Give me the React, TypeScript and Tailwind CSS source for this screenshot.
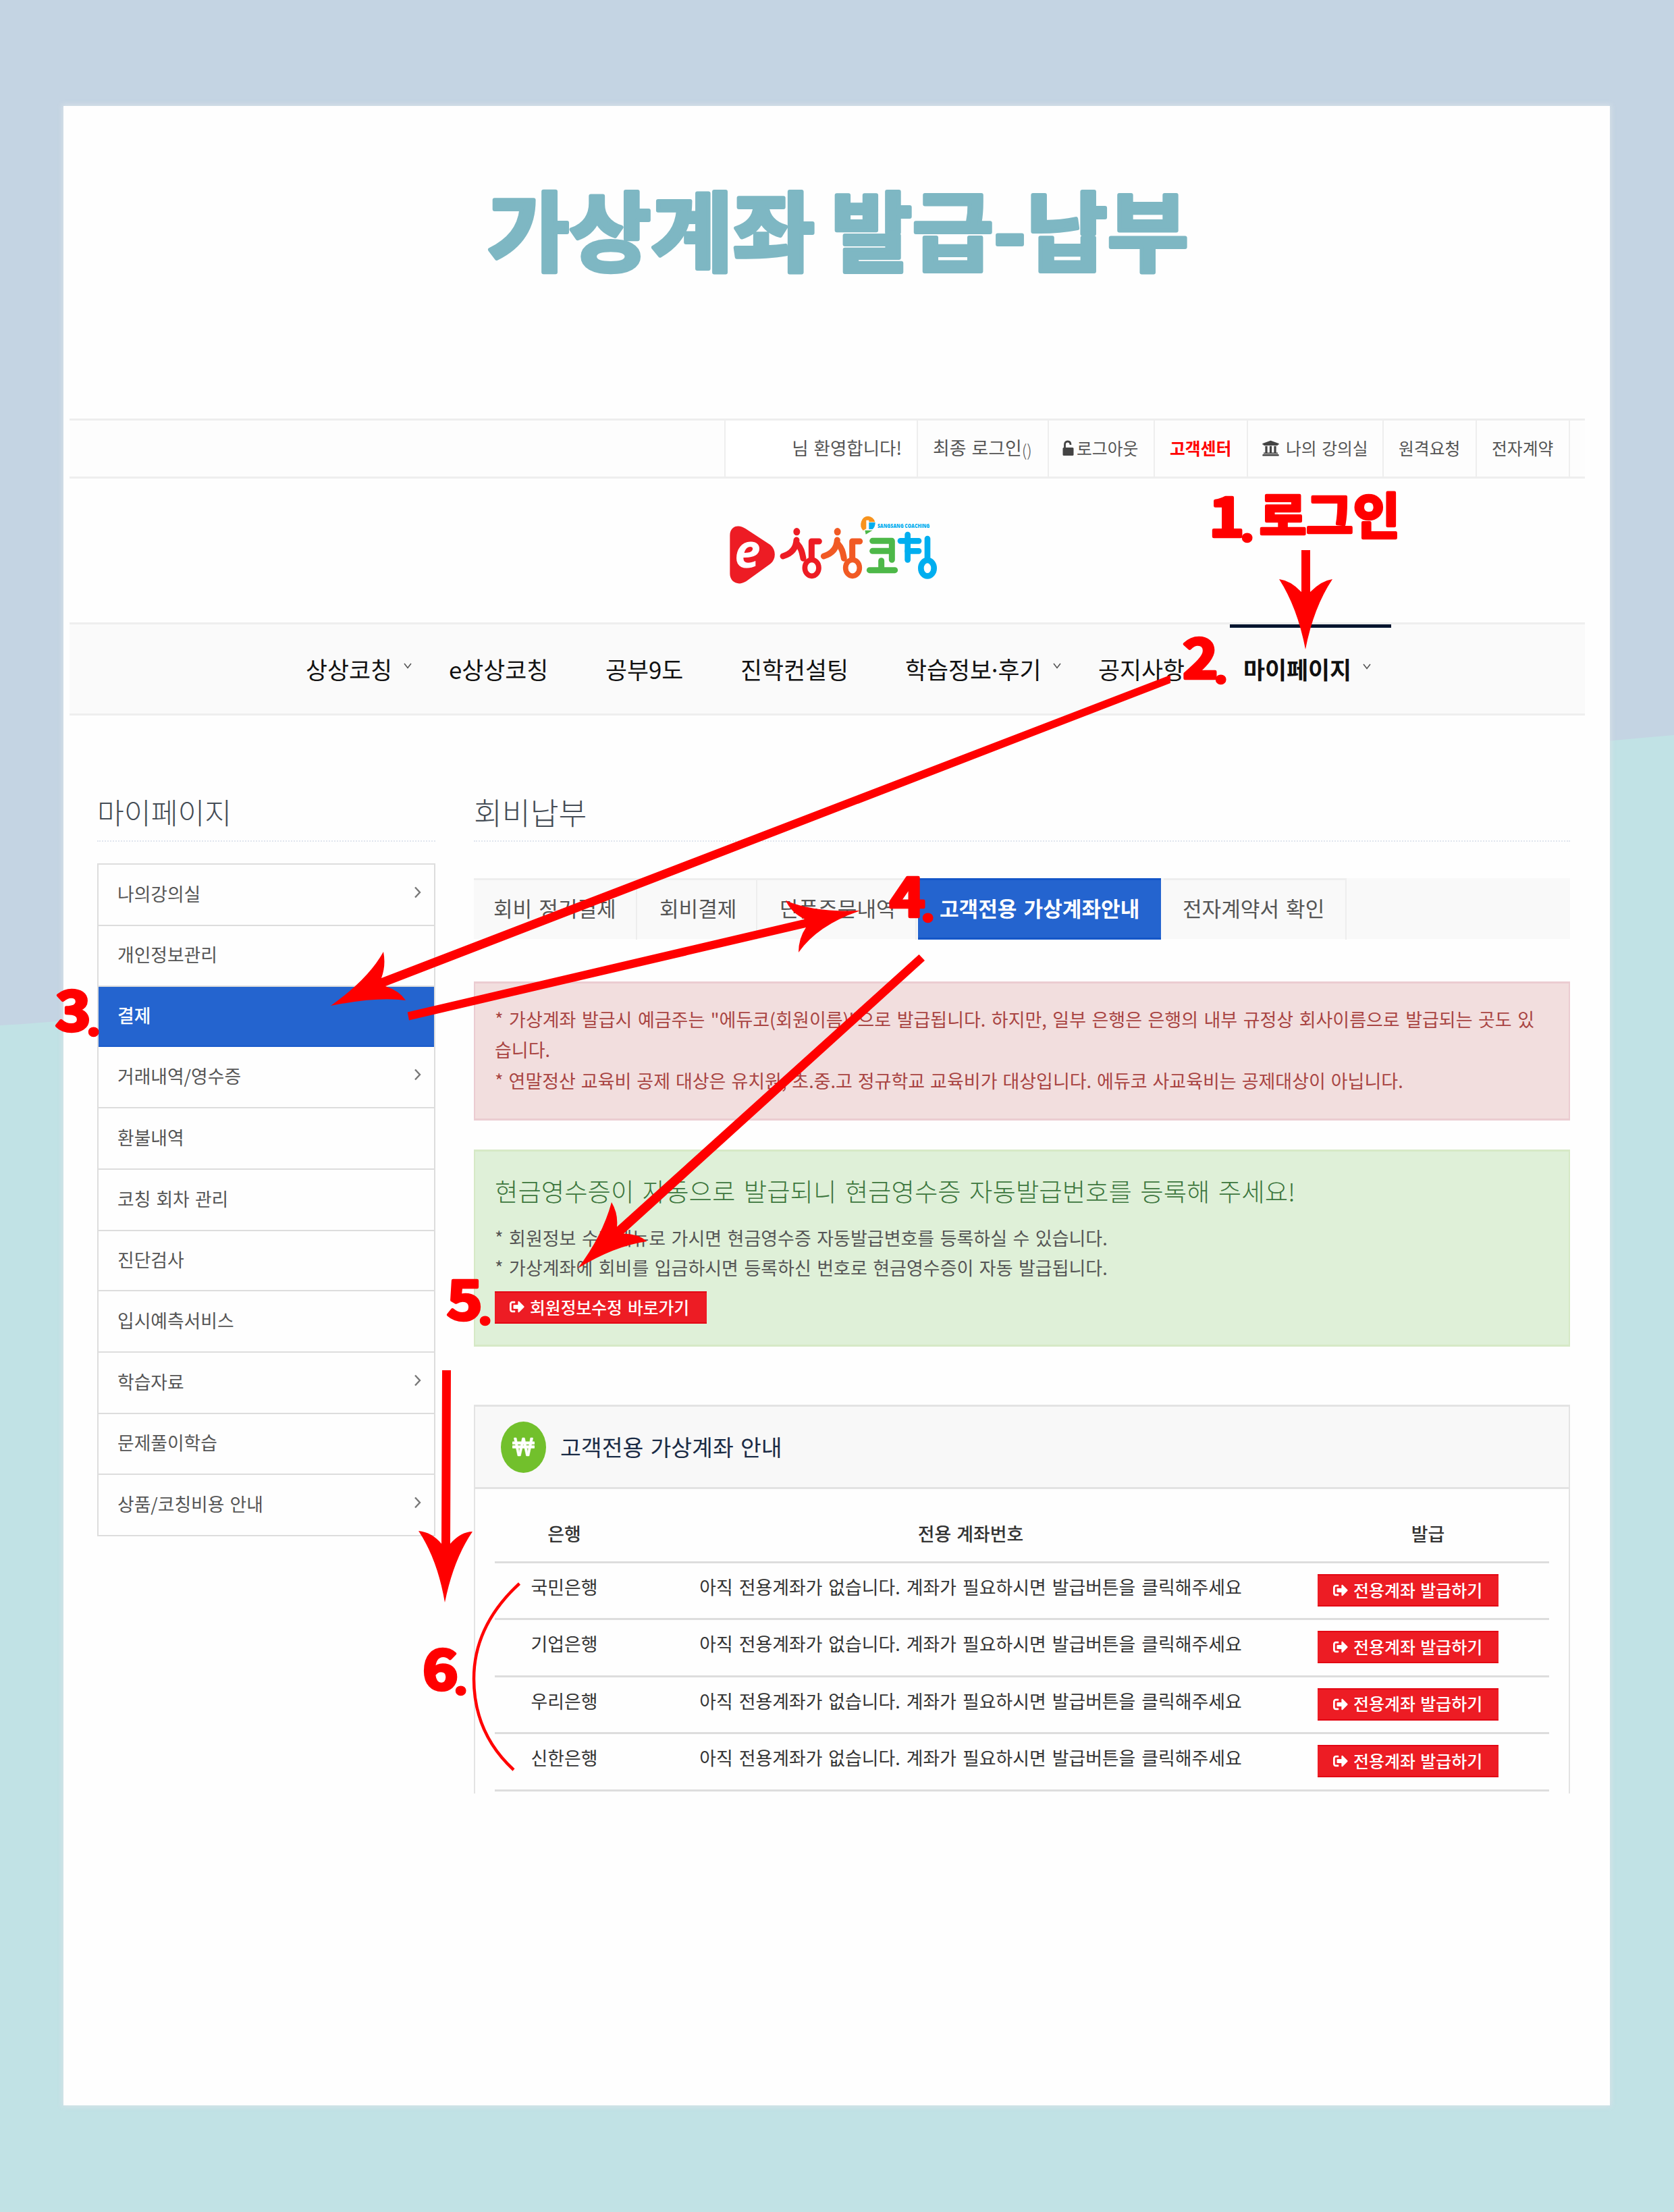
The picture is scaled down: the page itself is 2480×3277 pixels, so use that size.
import React from "react";
import { FaSignOutAlt, FaUniversity, FaWonSign } from "react-icons/fa";

const FONT = "font-['Noto_Sans_CJK_KR','Noto_Sans',sans-serif]";

function Backdrop() {
  return (
    <svg className="absolute inset-0" width="2480" height="3277" viewBox="0 0 2480 3277">
      <rect width="2480" height="3277" fill="#c4d4e3" />
      <path d="M0 1519 C700 1480 1500 1170 2480 1089 V3277 H0 Z" fill="#c1e2e5" />
    </svg>
  );
}

function Title() {
  return (
    <h1 className="flex h-[463px] items-start justify-center pt-[106px]">
      <svg width="1060" height="160" viewBox="0 0 1060 160" className="overflow-visible">
        <g
          fill="#7eb7c3"
          stroke="#7eb7c3"
          strokeWidth="6"
          strokeLinejoin="round"
          fontSize="128"
          fontWeight="700"
          fontFamily="'Noto Sans CJK KR', sans-serif"
        >
          <text x="12" y="129" textLength="485" lengthAdjust="spacingAndGlyphs">가상계좌</text>
          <text x="521" y="129" textLength="530" lengthAdjust="spacingAndGlyphs">발급-납부</text>
        </g>
      </svg>
    </h1>
  );
}

function UnlockIcon() {
  return (
    <svg width="17" height="24" viewBox="0 0 17 24" className="mr-1">
      <path d="M3.5 12 V6.5 Q3.5 2 7.8 2 Q12 2 12 7" fill="none" stroke="#444" strokeWidth="2.8" />
      <rect x="0.5" y="11" width="16" height="12" rx="1.5" fill="#444" />
    </svg>
  );
}

function TopBar() {
  const cell = "flex items-center border-l-2 border-[#eeeeee] whitespace-nowrap pb-[2px]";
  return (
    <div className="ml-[9px] flex h-[89px] w-[2245px] border-y-[3px] border-[#eeeeee] bg-[#fdfdfd] text-[24.8px] leading-none text-[#555] [word-spacing:0.08em]">
      <div className="w-[970px]" />
      <div className={`${cell} w-[285px] justify-end bg-white pr-[22px] text-[26.5px]`}>님 환영합니다!</div>
      <div className={`${cell} w-[194px] pl-[22px] text-[26.9px]`}>
        최종 로그인<span className="mt-1 text-[24px] font-light">()</span>
      </div>
      <div className={`${cell} w-[157px] pl-[20px]`}>
        <UnlockIcon />
        로그아웃
      </div>
      <div className={`${cell} w-[138px] pl-[22px] font-bold text-[#ff0000]`}>고객센터</div>
      <div className={`${cell} w-[201px] pl-[20px]`}>
        <FaUniversity className="mr-[9px] h-[26px] w-[27px] text-[#444]" />
        나의 강의실
      </div>
      <div className={`${cell} w-[138px] pl-[22px]`}>원격요청</div>
      <div className={`${cell} w-[138px] pl-[22px]`}>전자계약</div>
      <div className="flex-1 border-l-2 border-[#eeeeee]" />
    </div>
  );
}

function Figure({ x, color }: { x: number; color: string }) {
  return (
    <g transform={`translate(${x} 0)`} stroke={color} fill="none" strokeLinecap="round" strokeLinejoin="round">
      <ellipse cx="75" cy="113" rx="15" ry="17" fill={color} stroke="none" />
      <path d="M74 150 C72 190 46 212 14 222" strokeWidth="27" />
      <path d="M78 168 C98 190 99 208 104 232" strokeWidth="27" />
      <path d="M141 235 V156 H174" strokeWidth="27" />
      <ellipse cx="142" cy="274" rx="31" ry="36" strokeWidth="23" />
    </g>
  );
}

function Logo() {
  return (
    <div className="flex h-[213px] pl-[976px] pt-[41px]">
      <svg width="330" height="130" viewBox="0 0 990 390">
        <path d="M34 130 C34 88 72 78 104 100 L214 172 C240 194 240 236 214 256 L106 334 C70 356 34 336 34 300 Z" fill="#ed1c24" />
        <text
          x="54"
          y="274"
          fontSize="212"
          fontWeight="700"
          fontStyle="italic"
          fill="#fff"
          textLength="116"
          lengthAdjust="spacingAndGlyphs"
          fontFamily="'Open Sans', sans-serif"
        >
          e
        </text>
        <Figure x={256} color="#ed1c24" />
        <Figure x={437} color="#f15a24" />
        <g stroke="#4db848" strokeWidth="27" fill="none" strokeLinecap="round" strokeLinejoin="round">
          <path d="M668 154 H754 V238" />
          <path d="M668 199 H750" />
          <path d="M707 242 V282" />
          <path d="M655 284 H767" />
        </g>
        <g stroke="#00aeef" strokeWidth="26" fill="none" strokeLinecap="round" strokeLinejoin="round">
          <path d="M824 126 V238" />
          <path d="M792 154 H873" />
          <path d="M824 199 H873" />
          <path d="M912 144 V235" />
          <ellipse cx="912" cy="275" rx="29" ry="35" />
        </g>
        <path d="M648 44 A32 37 0 0 0 626 108 L640 100 V62 H652 V70 H679 A34 34 0 0 0 648 44" fill="#f7931e" />
        <path d="M652 72 H680 Q680 92 668 102 H652 Z" fill="#00aeef" />
        <path d="M634 107 L668 107 L638 125 Z" fill="#4db848" />
        <text
          x="690"
          y="96"
          fontSize="25"
          fontWeight="800"
          fill="#00aeef"
          textLength="232"
          lengthAdjust="spacingAndGlyphs"
          fontFamily="'Open Sans', sans-serif"
        >
          SANGSANG COACHING
        </text>
      </svg>
    </div>
  );
}

function Caret() {
  return (
    <svg width="12" height="9" viewBox="0 0 12 9">
      <path d="M1 1 L6 7.5 L11 1" fill="none" stroke="#555" strokeWidth="1.6" />
    </svg>
  );
}

function Nav() {
  const item = "flex items-center whitespace-nowrap";
  return (
    <div className="ml-[9px] flex h-[138px] w-[2245px] border-y-[3px] border-[#eeeeee] bg-[#fafafa] pl-[350px] text-[34.8px] leading-none text-[#111]">
      <div className={`${item} w-[212px]`}>
        상상코칭
        <span className="ml-[17px] -mt-[9px]"><Caret /></span>
      </div>
      <div className={`${item} w-[232px]`}>e상상코칭</div>
      <div className={`${item} w-[200px]`}>공부9도</div>
      <div className={`${item} w-[244px]`}>진학컨설팅</div>
      <div className={`${item} w-[286px]`}>
        학습정보<span className="-mx-[5px]">·</span>후기
        <span className="ml-[17px] -mt-[9px]"><Caret /></span>
      </div>
      <div className={`${item} w-[195px]`}>공지사항</div>
      <div className={`${item} w-[239px] border-t-[5px] border-[#02152f] pb-[4px] pl-[20px] font-bold`}>
        마이페이지
        <span className="ml-[17px] -mt-[9px]"><Caret /></span>
      </div>
    </div>
  );
}

const MENU: { label: string; h: string; arrow?: boolean; active?: boolean }[] = [
  { label: "나의강의실", h: "h-[91px]", arrow: true },
  { label: "개인정보관리", h: "h-[90px]" },
  { label: "결제", h: "h-[89px]", active: true },
  { label: "거래내역/영수증", h: "h-[91px]", arrow: true },
  { label: "환불내역", h: "h-[91px]" },
  { label: "코칭 회차 관리", h: "h-[91px]" },
  { label: "진단검사", h: "h-[89px]" },
  { label: "입시예측서비스", h: "h-[91px]" },
  { label: "학습자료", h: "h-[91px]", arrow: true },
  { label: "문제풀이학습", h: "h-[90px]" },
  { label: "상품/코칭비용 안내", h: "h-[91px]", arrow: true },
];

function Sidebar() {
  return (
    <aside className="w-[501px]">
      <h2 className="h-[187px] border-b-2 border-dotted border-[#dfe5ee] pt-[109px] text-[43.3px] font-light leading-[66px] text-[#444c55]">
        마이페이지
      </h2>
      <ul className="mt-[32px] border-x-2 border-t-2 border-[#dddddd]">
        {MENU.map((m) => (
          <li
            key={m.label}
            className={`${m.h} flex items-center justify-between border-b-2 pb-[3px] pl-[28px] pr-[19px] text-[26.8px] leading-none [word-spacing:0.08em] ${
              m.active ? "border-[#1b5bcb] bg-[#2464cf] font-medium text-white" : "border-[#dddddd] text-[#555]"
            }`}
          >
            {m.label}
            {m.arrow && (
              <svg width="11" height="18" viewBox="0 0 11 18" className="mb-1">
                <path d="M2 1.5 L9 9 L2 16.5" fill="none" stroke="#777" strokeWidth="2.4" />
              </svg>
            )}
          </li>
        ))}
      </ul>
    </aside>
  );
}

function Tabs() {
  const tab = "flex h-[91px] items-center whitespace-nowrap border-r-2 border-t-[3px] border-[#eeeeee] pb-[7px]";
  return (
    <div className="mt-[54px] flex h-[90px] bg-[#f9f9f9] text-[31.1px] leading-none text-[#555] [word-spacing:0.1em]">
      <div className={`${tab} w-[242px] pl-[29px]`}>회비 정기결제</div>
      <div className={`${tab} w-[178px] pl-[33px]`}>회비결제</div>
      <div className={`${tab} w-[236px] pl-[33px]`}>단품주문내역</div>
      <div className="ml-[2px] flex h-[91px] w-[360px] items-center whitespace-nowrap border-y-[3px] border-[#1456c8] bg-[#2464cf] pb-[4px] pl-[32px] font-bold text-white">
        고객전용 가상계좌안내
      </div>
      <div className={`${tab} ml-[4px] w-[271px] pl-[28px]`}>전자계약서 확인</div>
    </div>
  );
}

function Notices() {
  return (
    <>
      <div className="mt-[63px] h-[206px] border-x-2 border-y-[3px] border-[#ebccd1] bg-[#f2dede] pl-[29px] pt-[30px] text-[27px] leading-[45.3px] text-[#a94442] [word-spacing:0.07em]">
        <p className="whitespace-nowrap [word-spacing:0.09em]">
          * 가상계좌 발급시 예금주는 "에듀코(회원이름)"으로 발급됩니다. 하지만, 일부 은행은 은행의 내부 규정상 회사이름으로 발급되는 곳도 있
        </p>
        <p>습니다.</p>
        <p className="whitespace-nowrap">
          * 연말정산 교육비 공제 대상은 유치원, 초.중.고 정규학교 교육비가 대상입니다. 에듀코 사교육비는 공제대상이 아닙니다.
        </p>
      </div>
      <div className="mt-[43px] h-[292px] border-x-2 border-y-[3px] border-[#d6e9c6] bg-[#dff0d8] pl-[29px] pt-[28px] text-[27px] leading-[44px] text-[#555] [word-spacing:0.09em]">
        <h3 className="whitespace-nowrap text-[37.4px] font-light leading-[60px] text-[#3c763d] [word-spacing:0.11em]">
          현금영수증이 자동으로 발급되니 현금영수증 자동발급번호를 등록해 주세요!
        </h3>
        <p className="mt-[18px] whitespace-nowrap">* 회원정보 수정메뉴로 가시면 현금영수증 자동발급변호를 등록하실 수 있습니다.</p>
        <p className="whitespace-nowrap">* 가상계좌에 회비를 입금하시면 등록하신 번호로 현금영수증이 자동 발급됩니다.</p>
        <div className="mt-[13px] flex h-[48px] w-[314px] items-center border-y-2 border-[#e30613] bg-[#ed1c24] pb-[3px] pl-[22px] text-[24.8px] font-medium text-white">
          <FaSignOutAlt className="mr-[8px] h-[22px] w-[22px]" />
          <span className="whitespace-nowrap">회원정보수정 바로가기</span>
        </div>
      </div>
    </>
  );
}

function AccountPanel() {
  return (
    <section className="mt-[86px] h-[576px] border-x-2 border-t-[3px] border-[#e3e3e3]">
      <header className="flex h-[122px] items-center border-b-[3px] border-[#e3e3e3] bg-[#f8f8f8] pl-[38px]">
        <span className="flex h-[76px] w-[67px] items-center justify-center rounded-[50%] bg-[#72c02c]">
          <FaWonSign preserveAspectRatio="none" className="h-[31px] w-[33px] stroke-white stroke-[8px] text-white" />
        </span>
        <span className="-mt-[2px] ml-[21px] text-[33.5px] leading-none text-[#1a2b45] [word-spacing:0.08em]">고객전용 가상계좌 안내</span>
      </header>
      <div className="mx-[29px] text-[26.9px] leading-none text-[#333]">
        <div className="flex h-[110px] items-center border-b-[3px] border-[#dddddd] pt-[26px] text-center font-medium [word-spacing:0.08em]">
          <span className="w-[206px]">은행</span>
          <span className="w-[998px]">전용 계좌번호</span>
          <span className="w-[357px]">발급</span>
        </div>
        {["국민은행", "기업은행", "우리은행", "신한은행"].map((bank) => (
          <div key={bank} className="flex h-[84.4px] border-b-[3px] border-[#dddddd] [word-spacing:0.11em]">
            <span className="w-[206px] pt-[22px] text-center">{bank}</span>
            <span className="w-[998px] pt-[22px] text-center">
              아직 전용계좌가 없습니다. 계좌가 필요하시면 발급버튼을 클릭해주세요
            </span>
            <span className="w-[357px] pl-[15px] pt-[16px]">
              <span className="flex h-[48px] w-[268px] items-center border-y-2 border-[#e30613] bg-[#ed1c24] pl-[23px] text-[25px] font-medium text-white [word-spacing:0.06em]">
                <FaSignOutAlt className="mr-[8px] h-[22px] w-[22px]" />
                <span className="-mt-[2px]">전용계좌 발급하기</span>
              </span>
            </span>
          </div>
        ))}
      </div>
    </section>
  );
}

function Step({ n, x, y }: { n: string; x: number; y: number }) {
  return (
    <text transform={`translate(${x} ${y}) scale(1.1 1)`}>
      {n}
      <tspan dx="-5" dy="6" fontSize="54">.</tspan>
    </text>
  );
}

function Annotations() {
  return (
    <svg className="absolute inset-0" width="2480" height="3277" viewBox="0 0 2480 3277">
      <g fill="#ff0000">
        <path d="M1928 815 H1941 V877 Q1958 860 1974 858 Q1946 900 1934 962 Q1922 900 1895 858 Q1912 860 1928 877 Z" />
        <path d="M1734 1000 V1012 L571 1461 Q592 1468 601 1482 Q560 1476 490 1490 Q546 1450 568 1410 Q572 1430 565 1449 Z" />
        <path d="M603.7 1499.5 L606 1511.5 L1194 1374 Q1183 1390 1183 1411 Q1212 1370 1275 1349 Q1205 1352 1164 1334 Q1172 1352 1192 1361.7 Z" />
        <path d="M1361.5 1414 L1370 1423 L924 1827.5 Q946 1828 958.5 1839 Q910 1846 856 1879 Q892 1832 906 1781 Q916 1798 914 1817.5 Z" />
        <path d="M655 2030 H668 L667 2287 Q683 2269 700 2269 Q672 2310 659 2374 Q648 2310 620 2268 Q640 2270 654 2287 Z" />
      </g>
      <path d="M769.5 2346 C724 2388 702 2436 702 2487 C702 2540 722 2586 761 2622" fill="none" stroke="#ff0000" strokeWidth="4.5" />
      <g
        fill="#ff0000"
        stroke="#ff0000"
        strokeWidth="4.5"
        strokeLinejoin="round"
        fontSize="81"
        fontWeight="700"
        fontFamily="'Noto Sans CJK KR', sans-serif"
      >
        <Step n="1" x={1791} y={795} />
        <text x="1866" y="791" fontSize="73" textLength="208" lengthAdjust="spacingAndGlyphs">로그인</text>
        <Step n="2" x={1752} y={1005} />
        <Step n="3" x={82} y={1527} />
        <Step n="4" x={1318} y={1358} />
        <Step n="5" x={662} y={1955} />
        <Step n="6" x={626} y={2503} />
      </g>
    </svg>
  );
}

export default function App() {
  return (
    <div className={`relative h-[3277px] w-[2480px] overflow-hidden ${FONT}`}>
      <Backdrop />
      <main className="relative ml-[94px] mt-[157px] h-[2962px] w-[2291px] bg-[#fefefe] shadow-[0_0_7px_2px_rgba(215,225,232,0.9)]">
        <Title />
        <TopBar />
        <Logo />
        <Nav />
        <div className="flex pl-[50px]">
          <Sidebar />
          <div className="ml-[57px] w-[1624px]">
            <h2 className="h-[187px] border-b-2 border-dotted border-[#dfe5ee] pt-[109px] text-[45.5px] font-light leading-[66px] text-[#444c55]">
              회비납부
            </h2>
            <Tabs />
            <Notices />
            <AccountPanel />
          </div>
        </div>
      </main>
      <Annotations />
    </div>
  );
}
